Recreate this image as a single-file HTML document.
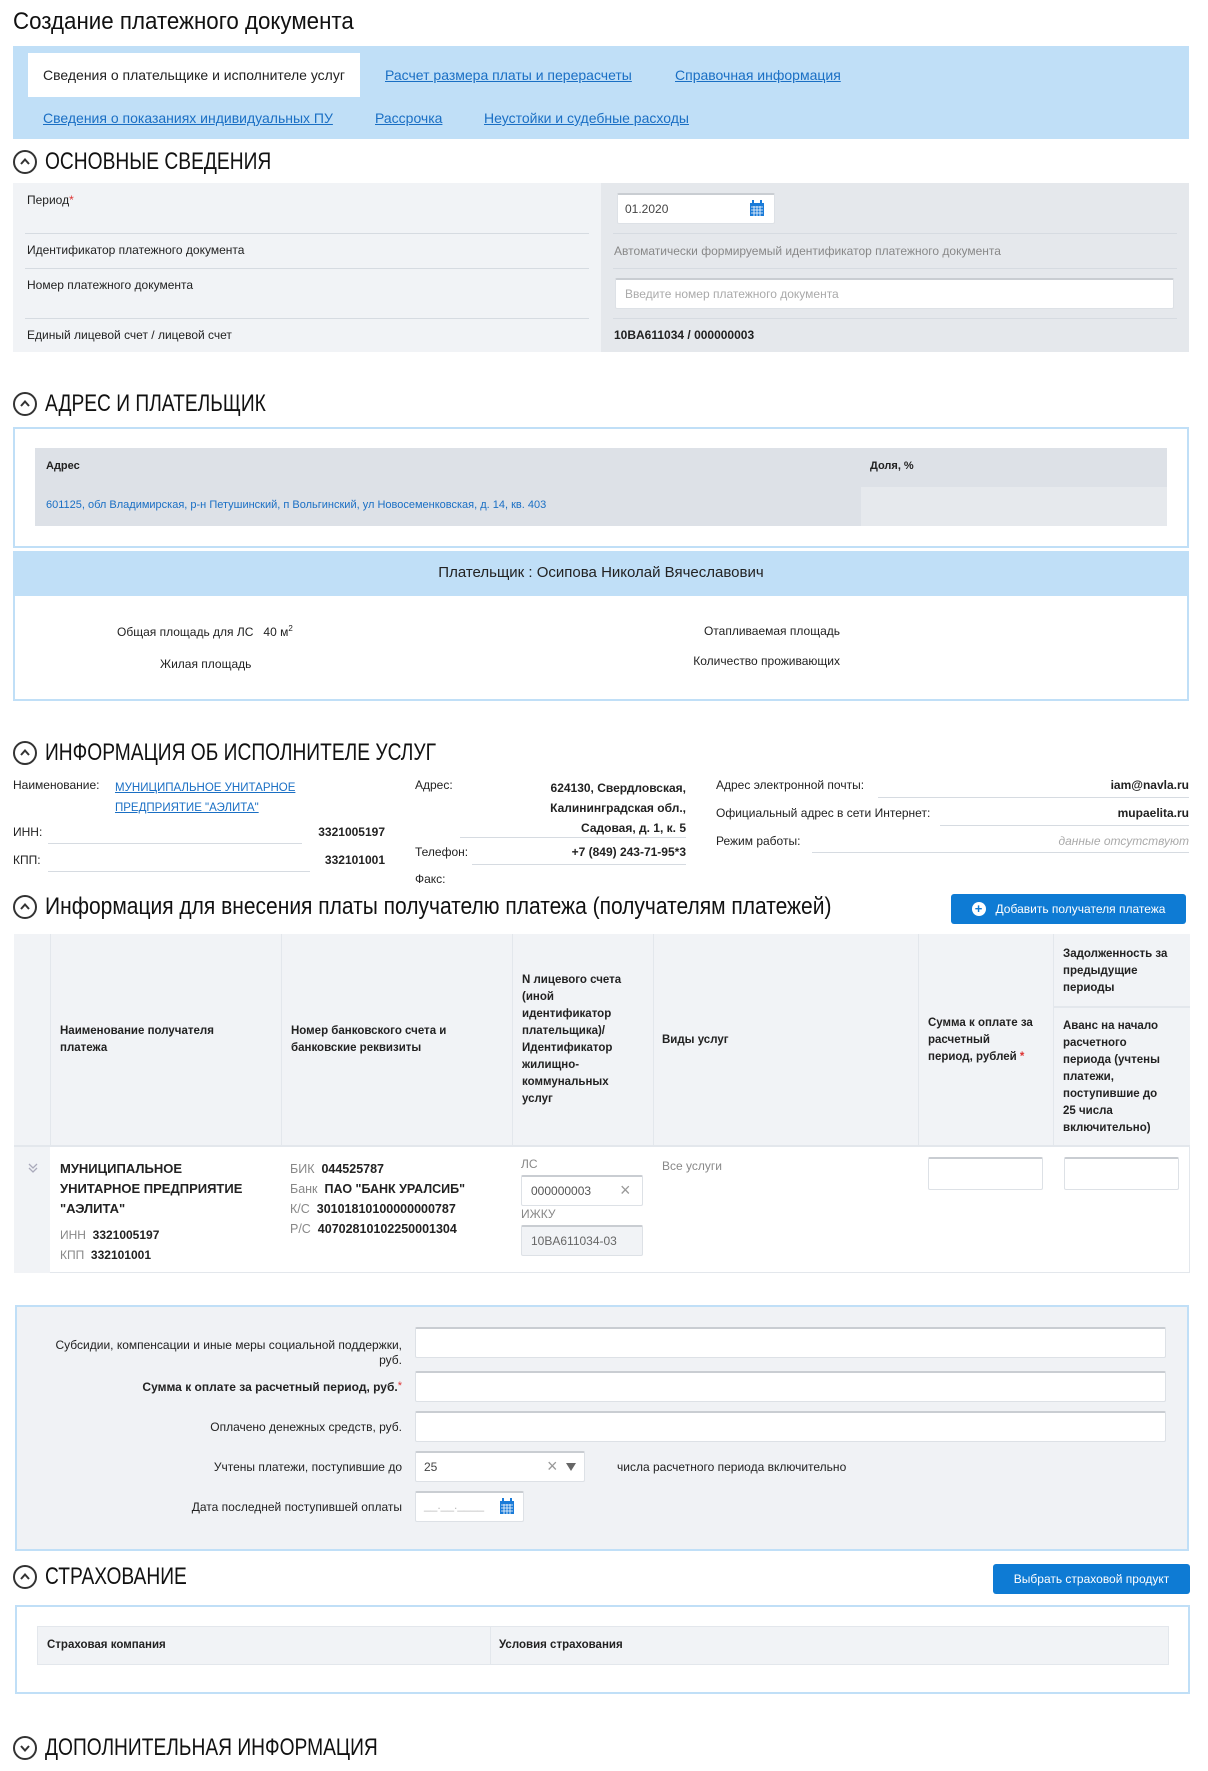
<!DOCTYPE html>
<html><head><meta charset="utf-8"><style>
*{box-sizing:border-box;margin:0;padding:0}
body{width:1208px;height:1771px;background:#fff;font-family:"Liberation Sans Narrow","Liberation Sans",sans-serif;font-size:12px;color:#222;position:relative;overflow:hidden}
.a{position:absolute;white-space:nowrap}
.lnk{color:#1a6fc4;text-decoration:underline}
h2{position:absolute;font-weight:normal;font-size:24px;left:13px;display:flex;align-items:center;gap:8px;color:#111;white-space:nowrap}
h2 span.t{display:inline-block;transform:scaleX(0.8);transform-origin:left center}
.ic{width:24px;height:24px;border:2.5px solid #333;border-radius:50%;display:inline-flex;align-items:center;justify-content:center;flex:none}
.inp{position:absolute;background:#fff;border:1px solid #dde1e6;border-top:2px solid #c9cdd2;border-radius:2px}
.sep{position:absolute;height:1px;background:#d6dbe1}
.th{font-family:"Liberation Sans",sans-serif;font-size:11.5px;font-weight:bold;line-height:17px}
.b{font-weight:bold}
.g{color:#888}
.btn{position:absolute;background:#0e7bd4;color:#fff;border-radius:3px;display:flex;align-items:center;justify-content:center;font-size:12px}
</style></head><body>
<div class="a" style="left:13px;top:8px;font-size:24px;color:#111;transform:scaleX(0.93);transform-origin:left">Создание платежного документа</div>
<div class="a" style="left:13px;top:46px;width:1176px;height:93px;background:#c0dff7"></div>
<div class="a" style="left:28px;top:53px;width:332px;height:44px;background:#fff"></div>
<div class="a" style="left:43px;top:67px;font-size:14px">Сведения о плательщике и исполнителе услуг</div>
<div class="a lnk" style="left:385px;top:67px;font-size:14px">Расчет размера платы и перерасчеты</div>
<div class="a lnk" style="left:675px;top:67px;font-size:14px">Справочная информация</div>
<div class="a lnk" style="left:43px;top:110px;font-size:14px">Сведения о показаниях индивидуальных ПУ</div>
<div class="a lnk" style="left:375px;top:110px;font-size:14px">Рассрочка</div>
<div class="a lnk" style="left:484px;top:110px;font-size:14px">Неустойки и судебные расходы</div>

<h2 style="top:148px"><span class="ic"><svg width="12" height="12" viewBox="0 0 12 12"><path d="M2 8L6 3.5L10 8" fill="none" stroke="#333" stroke-width="2"/></svg></span><span class="t">ОСНОВНЫЕ СВЕДЕНИЯ</span></h2>
<div class="a" style="left:13px;top:183px;width:588px;height:169px;background:#f1f3f6"></div>
<div class="a" style="left:601px;top:183px;width:588px;height:169px;background:#e5e8ec"></div>
<div class="a" style="left:27px;top:193px">Период<span style="color:#d33">*</span></div>
<div class="inp" style="left:617px;top:193px;width:158px;height:31px"></div>
<div class="a" style="left:625px;top:202px;color:#444">01.2020</div>
<svg class="a" style="left:750px;top:200px" width="14" height="16" viewBox="0 0 14 16"><rect x="0" y="3" width="14" height="13" fill="#1a7bd8"/><rect x="2" y="0" width="2" height="4" fill="#1a7bd8"/><rect x="10" y="0" width="2" height="4" fill="#1a7bd8"/><path d="M1 7h12M1 10h12M1 13h12M4 6v10M7 6v10M10 6v10" stroke="#fff" stroke-width=".8"/></svg>
<div class="sep" style="left:25px;top:233px;width:564px"></div><div class="sep" style="left:613px;top:233px;width:564px"></div>
<div class="a" style="left:27px;top:243px">Идентификатор платежного документа</div>
<div class="a g" style="left:614px;top:244px">Автоматически формируемый идентификатор платежного документа</div>
<div class="sep" style="left:25px;top:268px;width:564px"></div><div class="sep" style="left:613px;top:268px;width:564px"></div>
<div class="a" style="left:27px;top:278px">Номер платежного документа</div>
<div class="inp" style="left:615px;top:278px;width:559px;height:31px"></div>
<div class="a" style="left:625px;top:287px;color:#aaa">Введите номер платежного документа</div>
<div class="sep" style="left:25px;top:318px;width:564px"></div><div class="sep" style="left:613px;top:318px;width:564px"></div>
<div class="a" style="left:27px;top:328px">Единый лицевой счет / лицевой счет</div>
<div class="a b" style="left:614px;top:328px">10BA611034 / 000000003</div>

<h2 style="top:390px"><span class="ic"><svg width="12" height="12" viewBox="0 0 12 12"><path d="M2 8L6 3.5L10 8" fill="none" stroke="#333" stroke-width="2"/></svg></span><span class="t">АДРЕС И ПЛАТЕЛЬЩИК</span></h2>
<div class="a" style="left:13px;top:427px;width:1176px;height:121px;border:2px solid #c0dff7"></div>
<div class="a" style="left:35px;top:448px;width:1132px;height:78px;background:#e6e9ed"></div>
<div class="a" style="left:35px;top:448px;width:1132px;height:39px;background:#dde1e7"></div>
<div class="a" style="left:35px;top:487px;width:826px;height:39px;background:#dde1e7"></div>
<div class="a b" style="left:46px;top:460px;font-size:11px">Адрес</div>
<div class="a b" style="left:870px;top:460px;font-size:11px">Доля, %</div>
<div class="a" style="left:46px;top:499px;color:#1a6fc4;font-size:11px">601125, обл Владимирская, р-н Петушинский, п Вольгинский, ул Новосеменковская, д. 14, кв. 403</div>
<div class="a" style="left:13px;top:551px;width:1176px;height:150px;border:2px solid #c0dff7"></div>
<div class="a" style="left:13px;top:551px;width:1176px;height:45px;background:#c0dff7"></div>
<div class="a" style="left:13px;top:564px;width:1176px;text-align:center;font-size:15px">Плательщик : Осипова Николай Вячеславович</div>
<div class="a" style="left:117px;top:624px">Общая площадь для ЛС &nbsp; 40 м<sup style="font-size:8px">2</sup></div>
<div class="a" style="left:160px;top:657px">Жилая площадь</div>
<div class="a" style="left:540px;top:624px;width:300px;text-align:right">Отапливаемая площадь</div>
<div class="a" style="left:540px;top:654px;width:300px;text-align:right">Количество проживающих</div>

<h2 style="top:739px"><span class="ic"><svg width="12" height="12" viewBox="0 0 12 12"><path d="M2 8L6 3.5L10 8" fill="none" stroke="#333" stroke-width="2"/></svg></span><span class="t">ИНФОРМАЦИЯ ОБ ИСПОЛНИТЕЛЕ УСЛУГ</span></h2>
<div class="a" style="left:13px;top:778px">Наименование:</div>
<div class="a lnk" style="left:115px;top:778px;font-size:11.5px;line-height:20px">МУНИЦИПАЛЬНОЕ УНИТАРНОЕ<br>ПРЕДПРИЯТИЕ "АЭЛИТА"</div>
<div class="a" style="left:13px;top:825px">ИНН:</div><div class="sep" style="left:48px;top:843px;width:254px"></div><div class="a b" style="left:300px;top:825px;width:85px;text-align:right">3321005197</div>
<div class="a" style="left:13px;top:853px">КПП:</div><div class="sep" style="left:48px;top:871px;width:262px"></div><div class="a b" style="left:300px;top:853px;width:85px;text-align:right">332101001</div>
<div class="a" style="left:415px;top:778px">Адрес:</div>
<div class="a b" style="left:480px;top:778px;width:206px;text-align:right;line-height:20px">624130, Свердловская,<br>Калининградская обл.,<br>Садовая, д. 1, к. 5</div>
<div class="sep" style="left:460px;top:837px;width:226px"></div>
<div class="a" style="left:415px;top:845px">Телефон:</div><div class="a b" style="left:520px;top:845px;width:166px;text-align:right">+7 (849) 243-71-95*3</div>
<div class="sep" style="left:472px;top:864px;width:214px"></div>
<div class="a" style="left:415px;top:872px">Факс:</div>
<div class="a" style="left:716px;top:778px">Адрес электронной почты:</div><div class="a b" style="left:1000px;top:778px;width:189px;text-align:right">iam@navla.ru</div><div class="sep" style="left:878px;top:797px;width:311px"></div>
<div class="a" style="left:716px;top:806px">Официальный адрес в сети Интернет:</div><div class="a b" style="left:1000px;top:806px;width:189px;text-align:right">mupaelita.ru</div><div class="sep" style="left:940px;top:825px;width:249px"></div>
<div class="a" style="left:716px;top:834px">Режим работы:</div><div class="a g" style="left:1000px;top:834px;width:189px;text-align:right;font-style:italic;color:#aaa">данные отсутствуют</div><div class="sep" style="left:812px;top:852px;width:377px"></div>

<h2 style="top:893px"><span class="ic"><svg width="12" height="12" viewBox="0 0 12 12"><path d="M2 8L6 3.5L10 8" fill="none" stroke="#333" stroke-width="2"/></svg></span><span class="t" style="transform:scaleX(0.875)">Информация для внесения платы получателю платежа (получателям платежей)</span></h2>
<div class="btn" style="left:951px;top:894px;width:235px;height:30px"><span style="width:14px;height:14px;border-radius:50%;background:#fff;color:#0e7bd4;font-weight:bold;font-size:13px;line-height:14px;text-align:center;margin-right:10px;font-family:'Liberation Sans'">+</span>Добавить получателя платежа</div>
<div class="a" style="left:14px;top:934px;width:1176px;height:339px;border:1px solid #e3e7ec"></div>
<div class="a" style="left:14px;top:934px;width:1176px;height:213px;background:#f1f3f6;border-bottom:2px solid #e3e7ec"></div>
<div class="a" style="left:14px;top:1147px;width:36px;height:126px;background:#f1f3f6"></div>
<div class="a" style="left:50px;top:934px;width:1px;height:213px;background:#e3e7ec"></div>
<div class="a" style="left:281px;top:934px;width:1px;height:213px;background:#e3e7ec"></div>
<div class="a" style="left:512px;top:934px;width:1px;height:213px;background:#e3e7ec"></div>
<div class="a" style="left:653px;top:934px;width:1px;height:213px;background:#e3e7ec"></div>
<div class="a" style="left:918px;top:934px;width:1px;height:213px;background:#e3e7ec"></div>
<div class="a" style="left:1053px;top:934px;width:1px;height:213px;background:#e3e7ec"></div>
<div class="a" style="left:1053px;top:1006px;width:137px;height:2px;background:#e3e7ec"></div>
<div class="a th" style="left:60px;top:1023px">Наименование получателя<br>платежа</div>
<div class="a th" style="left:291px;top:1023px">Номер банковского счета и<br>банковские реквизиты</div>
<div class="a th" style="left:522px;top:972px">N лицевого счета<br>(иной<br>идентификатор<br>плательщика)/<br>Идентификатор<br>жилищно-<br>коммунальных<br>услуг</div>
<div class="a th" style="left:662px;top:1032px">Виды услуг</div>
<div class="a th" style="left:928px;top:1015px">Сумма к оплате за<br>расчетный<br>период, рублей <span style="color:#d33">*</span></div>
<div class="a th" style="left:1063px;top:946px">Задолженность за<br>предыдущие<br>периоды</div>
<div class="a th" style="left:1063px;top:1018px">Аванс на начало<br>расчетного<br>периода (учтены<br>платежи,<br>поступившие до<br>25 числа<br>включительно)</div>
<svg class="a" style="left:27px;top:1162px" width="12" height="12" viewBox="0 0 12 12"><path d="M2 2l4 4 4-4M2 6l4 4 4-4" fill="none" stroke="#aab" stroke-width="1.3"/></svg>
<div class="a b" style="left:60px;top:1159px;font-size:13px;line-height:20px">МУНИЦИПАЛЬНОЕ<br>УНИТАРНОЕ ПРЕДПРИЯТИЕ<br>"АЭЛИТА"</div>
<div class="a" style="left:60px;top:1225px;line-height:20px"><span class="g">ИНН</span> &nbsp;<b>3321005197</b><br><span class="g">КПП</span> &nbsp;<b>332101001</b></div>
<div class="a" style="left:290px;top:1159px;line-height:20px;font-size:12.5px"><span class="g">БИК</span> &nbsp;<b>044525787</b><br><span class="g">Банк</span> &nbsp;<b>ПАО "БАНК УРАЛСИБ"</b><br><span class="g">К/С</span> &nbsp;<b>30101810100000000787</b><br><span class="g">Р/С</span> &nbsp;<b>40702810102250001304</b></div>
<div class="a g" style="left:521px;top:1157px">ЛС</div>
<div class="inp" style="left:521px;top:1175px;width:122px;height:31px"></div>
<div class="a" style="left:531px;top:1184px;color:#555">000000003</div>
<div class="a" style="left:620px;top:1180px;color:#999;font-size:18px;font-family:'Liberation Sans'">×</div>
<div class="a g" style="left:521px;top:1207px">ИЖКУ</div>
<div class="inp" style="left:521px;top:1225px;width:122px;height:31px;background:#f1f3f6"></div>
<div class="a" style="left:531px;top:1234px;color:#666">10BA611034-03</div>
<div class="a g" style="left:662px;top:1159px">Все услуги</div>
<div class="inp" style="left:928px;top:1157px;width:115px;height:33px"></div>
<div class="inp" style="left:1064px;top:1157px;width:115px;height:33px"></div>

<div class="a" style="left:15px;top:1305px;width:1174px;height:246px;background:#f0f2f5;border:2px solid #c0dff7"></div>
<div class="a" style="left:30px;top:1338px;width:372px;text-align:right;line-height:15px">Субсидии, компенсации и иные меры социальной поддержки,<br>руб.</div>
<div class="inp" style="left:415px;top:1327px;width:751px;height:31px"></div>
<div class="a b" style="left:30px;top:1380px;width:372px;text-align:right">Сумма к оплате за расчетный период, руб.<span style="color:#d33;font-weight:normal;vertical-align:top;font-size:11px">*</span></div>
<div class="inp" style="left:415px;top:1371px;width:751px;height:31px"></div>
<div class="a" style="left:30px;top:1420px;width:372px;text-align:right">Оплачено денежных средств, руб.</div>
<div class="inp" style="left:415px;top:1411px;width:751px;height:31px"></div>
<div class="a" style="left:30px;top:1460px;width:372px;text-align:right">Учтены платежи, поступившие до</div>
<div class="inp" style="left:415px;top:1451px;width:170px;height:31px"></div>
<div class="a" style="left:424px;top:1460px;color:#444">25</div>
<div class="a" style="left:547px;top:1456px;color:#999;font-size:18px;font-family:'Liberation Sans'">×</div>
<svg class="a" style="left:566px;top:1463px" width="10" height="8" viewBox="0 0 10 8"><path d="M0 0h10L5 8z" fill="#666"/></svg>
<div class="a" style="left:617px;top:1460px">числа расчетного периода включительно</div>
<div class="a" style="left:30px;top:1500px;width:372px;text-align:right">Дата последней поступившей оплаты</div>
<div class="inp" style="left:415px;top:1491px;width:109px;height:31px"></div>
<div class="a" style="left:424px;top:1498px;color:#bbb">__.__.____</div>
<svg class="a" style="left:500px;top:1498px" width="14" height="16" viewBox="0 0 14 16"><rect x="0" y="3" width="14" height="13" fill="#1a7bd8"/><rect x="2" y="0" width="2" height="4" fill="#1a7bd8"/><rect x="10" y="0" width="2" height="4" fill="#1a7bd8"/><path d="M1 7h12M1 10h12M1 13h12M4 6v10M7 6v10M10 6v10" stroke="#fff" stroke-width=".8"/></svg>

<h2 style="top:1563px"><span class="ic"><svg width="12" height="12" viewBox="0 0 12 12"><path d="M2 8L6 3.5L10 8" fill="none" stroke="#333" stroke-width="2"/></svg></span><span class="t">СТРАХОВАНИЕ</span></h2>
<div class="btn" style="left:993px;top:1564px;width:197px;height:30px">Выбрать страховой продукт</div>
<div class="a" style="left:15px;top:1605px;width:1175px;height:89px;border:2px solid #c0dff7"></div>
<div class="a" style="left:37px;top:1626px;width:1132px;height:39px;background:#f1f3f6;border:1px solid #e3e7ec"></div>
<div class="a" style="left:490px;top:1626px;width:1px;height:39px;background:#e3e7ec"></div>
<div class="a b" style="left:47px;top:1639px;font-size:11.5px">Страховая компания</div>
<div class="a b" style="left:499px;top:1639px;font-size:11.5px">Условия страхования</div>

<h2 style="top:1734px"><span class="ic"><svg width="12" height="12" viewBox="0 0 12 12"><path d="M2 4L6 8.5L10 4" fill="none" stroke="#333" stroke-width="2"/></svg></span><span class="t">ДОПОЛНИТЕЛЬНАЯ ИНФОРМАЦИЯ</span></h2>
</body></html>
